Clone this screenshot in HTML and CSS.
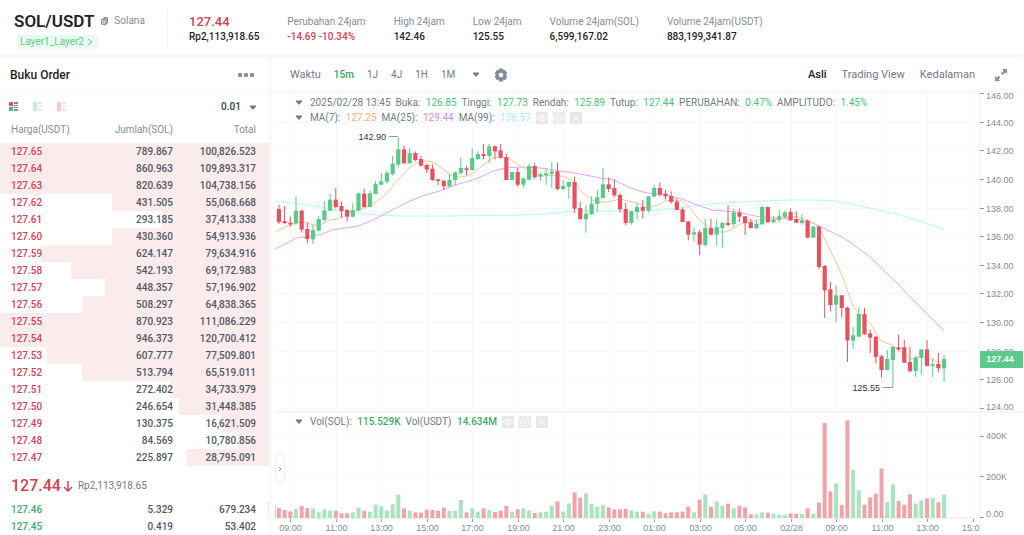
FILE: index.html
```
<!DOCTYPE html>
<html lang="id">
<head>
<meta charset="utf-8">
<title>SOL/USDT</title>
<link rel="stylesheet" href="styles.css">
</head>
<body>
<svg class="defs" aria-hidden="true">
  <symbol id="eye" viewBox="0 0 12 12"><path d="M1 6q5-6 10 0q-5 6-10 0z"/><circle cx="6" cy="6" r="1.7"/></symbol>
  <symbol id="cog" viewBox="0 0 12 12"><path d="M6 1l4.3 2.5v5L6 11 1.7 8.500v-5z"/><circle cx="6" cy="6" r="2"/></symbol>
  <symbol id="cross" viewBox="0 0 12 12"><path d="M2.500 2.500l7 7M9.500 2.500l-7 7"/></symbol>
  <symbol id="caret" viewBox="0 0 6 5"><path d="M0 .5h6v1L3.500 4.500h-1L0 1.500z"/></symbol>
</svg>
<header class="ticker">
  <div class="pair">
    <div class="pair-line">
      <h1>SOL/USDT</h1>
      <a class="project" href="#solana"><svg class="doc" viewBox="0 0 8 10"><path d="M2.500 1L5.500 0 8 1v6.500L6 8.500V10L3 9.500 0 9V3l2.500-.5z"/><path class="doc-lines" d="M1.500 4.500h2.500v3.500H1.500zM1.500 6h2.500M5.500 2.500v5"/></svg>Solana</a>
    </div>
    <a class="tag" href="#layer">Layer1_Layer2<svg viewBox="0 0 6 8"><path d="M1 1l4 3-4 3"/></svg></a>
  </div>
  <div class="stat stat-price"><strong class="down">127.44</strong><span>Rp2,113,918.65</span></div>
  <dl class="stats">
    <div class="stat"><dt>Perubahan 24jam</dt><dd class="down">-14.69 -10.34%</dd></div>
    <div class="stat"><dt>High 24jam</dt><dd>142.46</dd></div>
    <div class="stat"><dt>Low 24jam</dt><dd>125.55</dd></div>
    <div class="stat"><dt>Volume 24jam(SOL)</dt><dd>6,599,167.02</dd></div>
    <div class="stat"><dt>Volume 24jam(USDT)</dt><dd>883,199,341.87</dd></div>
  </dl>
</header>
<main class="workspace">
  <section class="panel book">
    <div class="book-head"><h2>Buku Order</h2><button class="more" aria-label="Menu"><i></i><i></i><i></i></button></div>
    <div class="book-tools">
      <button aria-label="Semua"><svg viewBox="0 0 10 10"><path fill="#e5535f" d="M0 0h4v4H0z"/><path fill="#4fba7b" d="M0 5h4v4H0z"/><path fill="#858b96" d="M5 0h4v2H5zM5 3h4v1H5zM5 5h4v1H5zM5 7h4v2H5z"/></svg></button>
      <button aria-label="Beli"><svg viewBox="0 0 10 10"><path fill="#c5ecd3" d="M0 0h4v9H0z"/><path fill="#e4e6e9" d="M5 0h4v2H5zM5 3h4v1H5zM5 5h4v1H5zM5 7h4v2H5z"/></svg></button>
      <button aria-label="Jual"><svg viewBox="0 0 10 10"><path fill="#f9c7cd" d="M0 0h4v9H0z"/><path fill="#e4e6e9" d="M5 0h4v2H5zM5 3h4v1H5zM5 5h4v1H5zM5 7h4v2H5z"/></svg></button>
      <label class="tick"><select aria-label="Presisi"><option>0.01</option></select><svg class="caret"><use href="#caret"/></svg></label>
    </div>
    <table class="asks">
      <thead><tr><th>Harga(USDT)</th><th>Jumlah(SOL)</th><th>Total</th></tr></thead>
      <tbody>
        <tr style="--depth:100%"><td>127.65</td><td>789.867</td><td>100,826.523</td></tr>
        <tr style="--depth:100%"><td>127.64</td><td>860.963</td><td>109,893.317</td></tr>
        <tr style="--depth:100%"><td>127.63</td><td>820.639</td><td>104,738.156</td></tr>
        <tr style="--depth:58.4%"><td>127.62</td><td>431.505</td><td>55,068.668</td></tr>
        <tr style="--depth:39.8%"><td>127.61</td><td>293.185</td><td>37,413.338</td></tr>
        <tr style="--depth:58.4%"><td>127.60</td><td>430.360</td><td>54,913.936</td></tr>
        <tr style="--depth:84.7%"><td>127.59</td><td>624.147</td><td>79,634.916</td></tr>
        <tr style="--depth:73.6%"><td>127.58</td><td>542.193</td><td>69,172.983</td></tr>
        <tr style="--depth:60.8%"><td>127.57</td><td>448.357</td><td>57,196.902</td></tr>
        <tr style="--depth:69.1%"><td>127.56</td><td>508.297</td><td>64,838.365</td></tr>
        <tr style="--depth:100%"><td>127.55</td><td>870.923</td><td>111,086.229</td></tr>
        <tr style="--depth:100%"><td>127.54</td><td>946.373</td><td>120,700.412</td></tr>
        <tr style="--depth:82.5%"><td>127.53</td><td>607.777</td><td>77,509.801</td></tr>
        <tr style="--depth:69.6%"><td>127.52</td><td>513.794</td><td>65,519.011</td></tr>
        <tr style="--depth:36.9%"><td>127.51</td><td>272.402</td><td>34,733.979</td></tr>
        <tr style="--depth:33.4%"><td>127.50</td><td>246.654</td><td>31,448.385</td></tr>
        <tr style="--depth:17.5%"><td>127.49</td><td>130.375</td><td>16,621.509</td></tr>
        <tr style="--depth:11.4%"><td>127.48</td><td>84.569</td><td>10,780.856</td></tr>
        <tr style="--depth:30.5%"><td>127.47</td><td>225.897</td><td>28,795.091</td></tr>
      </tbody>
    </table>
    <div class="last"><strong>127.44</strong><svg viewBox="0 0 10 12"><path d="M5 1v10M1 7l4 4 4-4"/></svg><span>Rp2,113,918.65</span></div>
    <table class="bids">
      <tbody>
        <tr style="--depth:.5%"><td>127.46</td><td>5.329</td><td>679.234</td></tr>
        <tr style="--depth:0%"><td>127.45</td><td>0.419</td><td>53.402</td></tr>
      </tbody>
    </table>
  </section>
  <section class="panel chart">
    <nav class="chart-bar">
      <span>Waktu</span><button class="on">15m</button><button>1J</button><button>4J</button><button>1H</button><button>1M</button>
      <button class="caret-button" aria-label="Interval lain"><svg class="caret"><use href="#caret"/></svg></button>
      <button aria-label="Pengaturan"><svg class="gear" viewBox="0 0 14 14"><path fill-rule="evenodd" d="M5 0.500h4l.5 1.800 1.800-.4 2 3.500L12 7l1.300 1.600-2 3.500-1.800-.4-.5 1.800H5l-.5-1.800-1.800.4-2-3.500L2 7 .7 5.400l2-3.500 1.800.4zM7 4.700a2.300 2.300 0 1 0 0 4.600 2.300 2.300 0 0 0 0-4.600z"/></svg></button>
      <div class="views"><button class="current">Asli</button><button>Trading View</button><button>Kedalaman</button>
      <button aria-label="Layar penuh"><svg class="expand" viewBox="0 0 14 14"><path d="M8 1h5v5l-1.700-1.700-2.800 2.800-1.600-1.600 2.800-2.800zM1 8l1.700 1.700 2-2 1.600 1.600-2 2L6 13H1z"/></svg></button></div>
    </nav>
    <div class="stage">
      <svg id="plot" class="plot" viewBox="272 92 752 443" role="img" aria-label="Grafik SOL/USDT"></svg>
      <div class="legend legend-price">
        <p><svg class="caret"><use href="#caret"/></svg><span>2025/02/28 13:45</span><span>Buka: <b>126.85</b></span><span>Tinggi: <b>127.73</b></span><span>Rendah: <b>125.89</b></span><span>Tutup: <b>127.44</b></span><span>PERUBAHAN: <b>0.47%</b></span><span>AMPLITUDO: <b>1.45%</b></span></p>
        <p><svg class="caret"><use href="#caret"/></svg><span>MA(7): <b class="ma7">127.25</b></span><span>MA(25): <b class="ma25">129.44</b></span><span>MA(99): <b class="ma99">136.57</b></span><span class="tools"><button aria-label="Sembunyikan MA"><svg><use href="#eye"/></svg></button><button aria-label="Atur MA"><svg><use href="#cog"/></svg></button><button aria-label="Hapus MA"><svg><use href="#cross"/></svg></button></span></p>
      </div>
      <div class="legend legend-volume">
        <p><svg class="caret"><use href="#caret"/></svg><span>Vol(SOL): <b class="vol">115.529K</b></span><span>Vol(USDT) <b class="vol">14.634M</b></span><span class="tools"><button aria-label="Sembunyikan volume"><svg><use href="#eye"/></svg></button><button aria-label="Atur volume"><svg><use href="#cog"/></svg></button><button aria-label="Hapus volume"><svg><use href="#cross"/></svg></button></span></p>
      </div>
      <button class="drawer" aria-label="Alat gambar"><svg viewBox="0 0 4 6"><path d="M1 1l2 2-2 2"/></svg></button>
    </div>
  </section>
</main>
<script src="chart.js"></script>
</body>
</html>
```
FILE: styles.css
```
* { box-sizing: border-box; }
body { margin: 0; background: #fff; color: #1e2329; font: 11px/16px Roboto, "Liberation Sans", sans-serif; }
body { height: 100vh; overflow: hidden; }
h1, h2, p, dl, dd { margin: 0; }
button { border: 0; padding: 0; background: none; color: inherit; font: inherit; display: flex; align-items: center; }
a { text-decoration: none; color: inherit; }
svg { display: block; }
.defs { position: absolute; width: 0; height: 0; }
.down { color: #cf4455; }
.caret { width: 6px; height: 5px; fill: #707a8a; }

.ticker { display: flex; align-items: center; height: 54px; padding-left: 14px; }
.pair { width: 154px; height: 40px; border-right: 1px solid #f3f4f5; }
.pair-line { display: flex; align-items: center; gap: 7px; height: 28px; }
h1 { font-size: 17px; line-height: 24px; font-weight: 600; }
.project { display: flex; align-items: center; gap: 6px; color: #858d9a; font-size: 10px; }
.doc { width: 7px; height: 10px; fill: #8b929d; }
.doc-lines { fill: none; stroke: #fff; stroke-width: .6; }
.tag { display: inline-flex; align-items: center; gap: 3px; height: 14px; margin-left: 3px; padding: 0 5px 0 3px; border-radius: 2px; background: #e9fbf0; color: #62ca8a; font-size: 10px; vertical-align: top; }
.tag svg { width: 6px; height: 8px; fill: none; stroke: #62ca8a; }
.stats { display: flex; gap: 28px; margin-left: 28px; }
.stat { display: flex; flex-direction: column; padding-top: 4px; white-space: nowrap; }
.stat dt { color: #858d9a; font-size: 10px; line-height: 15px; }
.stat dd { font-size: 10px; line-height: 15px; font-weight: 500; }
.stat-price { margin-left: 21px; font-size: 10px; line-height: 14px; font-weight: 500; }
.stat-price strong { font-size: 13px; line-height: 16px; font-weight: 500; }

.workspace { display: grid; grid-template-columns: 269px minmax(0, 1fr); gap: 3px; padding-top: 4px; background: #f9fafa; }
.panel { background: #fff; }
.book { border-radius: 0 4px 0 0; }
.chart { border-radius: 4px 4px 0 0; }
.book-head { display: flex; align-items: center; justify-content: space-between; height: 35px; padding: 0 15px 0 10px; border-bottom: 1px solid #f5f5f6; }
h2 { font-size: 12px; line-height: 16px; font-weight: 500; }
.more { gap: 2px; }
.more i { width: 4px; height: 4px; border-radius: 1px; background: #848e9c; }
.book-tools { display: flex; align-items: center; gap: 14px; height: 28px; padding: 0 13px 0 9px; }
.book-tools button svg { width: 10px; height: 10px; }
.tick { display: flex; align-items: center; gap: 9px; margin-left: auto; }
.tick select { appearance: none; border: 0; padding: 0; background: none; color: #33383f; font: 500 10px/14px Roboto, sans-serif; }
table { width: 100%; border-collapse: collapse; table-layout: fixed; font-size: 10px; font-weight: 500; color: #525862; }
th { height: 22px; padding: 0 0 5px; color: #858d9a; font-weight: 400; line-height: 17px; text-align: right; }
td { height: 17px; padding: 1px 0 0; line-height: 16px; text-align: right; }
th:nth-child(1), td:nth-child(1) { width: 81px; padding-left: 11px; text-align: left; }
th:nth-child(2), td:nth-child(2) { width: 92px; }
th:nth-child(3), td:nth-child(3) { padding-right: 13px; }
.asks td:first-child { color: #cf4455; }
.bids td:first-child { color: #43a86d; }
.asks tbody tr { background: linear-gradient(to left, #faebed var(--depth), transparent 0); }
.bids tr { background: linear-gradient(to left, #d6f3e0 var(--depth), transparent 0); }
.last { display: flex; align-items: center; height: 35px; padding: 4px 0 0 11px; font-size: 10px; color: #707a8a; }
.last strong { color: #cf4455; font-size: 16px; font-weight: 500; }
.last svg { width: 10px; height: 12px; margin: 0 5px 0 2px; fill: none; stroke: #cf4455; stroke-width: 1.500; }

.chart-bar { display: flex; align-items: center; gap: 13px; height: 34px; padding: 0 16px 0 18px; border-bottom: 1px solid #f5f5f6; color: #707a8a; }
.chart-bar > button { font-size: 10px; }
.chart-bar .on { color: #2fa35e; font-weight: 500; }
.caret-button { margin: 0 2px 0 5px; }
.gear { width: 14px; height: 14px; fill: #848e9c; }
.views { display: flex; align-items: center; gap: 15px; margin-left: auto; color: #707a8a; }
.views .current { color: #1e2329; font-weight: 500; }
.expand { width: 14px; height: 14px; margin-left: 4px; fill: #848e9c; }
.stage { position: relative; }
.plot { width: 100%; height: auto; font-family: "Liberation Sans", Arial, sans-serif; font-size: 9px; }
.legend { position: absolute; left: 24px; color: #707a8a; font-size: 10px; }
.legend p { display: flex; align-items: center; gap: 5px; height: 15px; white-space: nowrap; }
.legend .caret { margin-right: 3px; }
.legend b { margin-left: 3px; font-weight: 400; color: #48c278; }
.legend-price { top: 3px; }
.legend-volume { top: 322px; }
.legend .ma7 { color: #f0b27a; }
.legend .ma25 { color: #dc85ee; }
.legend .ma99 { color: #9feff6; }
.legend .vol { color: #43a86d; font-weight: 500; }
.tools { display: flex; gap: 5px; }
.tools svg { width: 12px; height: 12px; background: #e8e8e8; fill: none; stroke: #fff; stroke-width: .8; }
.drawer { position: absolute; top: 363px; left: 3px; width: 10px; height: 28px; justify-content: center; border: 1px solid #eeeff0; border-radius: 3px; background: #fff; }
.drawer svg { width: 4px; height: 6px; fill: none; stroke: #707a8a; stroke-width: .8; }

.grid { stroke: #f7f8f8; }
.divider { stroke: #f5f5f6; stroke-width: 2; }
.axis { stroke: #eff0f1; }
.mark { stroke: #9298a1; }
.label { fill: #858b95; }
.note { fill: #333942; font-size: 9px; }
.up-fill { fill: #5ac98a; }
.down-fill { fill: #e4535f; }
.up-volume { fill: #a9e3c0; }
.down-volume { fill: #f0a3aa; }
.average { fill: none; }
.average-7 { stroke: #f3c59b; }
.average-25 { stroke: #e6a4f4; }
.average-99 { stroke: #b8f6fa; }
.price-tag { fill: #5ac98a; }
.price-text { fill: #fff; font-weight: bold; }
```
FILE: chart.js
```
const NS = "http://www.w3.org/2000/svg";
const plot = document.getElementById("plot");
const STEP = 5.685;
const x = k => 290.3 + k * STEP;
const y = u => 130 + u / 3;
const price = p => 208 + (138 - p) * 14.33;

function draw(tag, attrs, text) {
  const node = document.createElementNS(NS, tag);
  for (const key in attrs) node.setAttribute(key, attrs[key]);
  if (text) node.textContent = text;
  plot.append(node);
}
const line = (cls, x1, y1, x2, y2) => draw("line", { class: cls, x1, y1, x2, y2 });

// Direction, then high, body top, body bottom and low in thirds of a unit.
const candles = `R 224 237 276 282,R 228 273 279 283,R 260 278 283 290,G 200 242 280 284,R 240 242 299 308,R 278 297 327 340,G 284 300 328 343,G 258 267 302 304,G 213 241 270 275,G 190 209 242 243,R 174 209 231 235,R 214 228 244 262,R 237 240 260 275,G 220 240 260 263,G 187 190 242 245,R 176 191 231 233,G 182 190 231 232,G 153 162 192 193,G 129 154 164 166,G 122 129 155 161,G 78 101 132 137,G 22 58 104 113,R 47 58 100 101,G 54 69 100 101,R 64 69 90 94,R 78 87 107 110,R 101 105 119 129,R 103 116 150 153,R 146 148 153 165,R 150 152 169 180,G 132 150 169 171,G 124 127 150 165,G 82 114 129 134,R 108 115 120 136,G 55 84 120 123,G 64 72 87 90,R 42 72 78 88,G 42 49 78 98,R 46 49 64 88,R 42 61 83 86,R 71 81 150 150,G 126 126 150 152,R 114 126 164 170,G 142 145 164 172,G 102 108 149 152,R 99 108 141 147,G 128 133 140 152,G 114 130 136 164,G 95 124 131 174,R 98 124 177 181,G 150 168 177 181,G 155 156 170 207,R 140 156 236 248,R 215 234 267 270,G 226 251 268 308,G 198 221 253 255,G 180 202 222 245,G 114 163 204 205,R 142 163 177 186,R 149 174 196 202,R 190 195 238 248,R 218 237 279 285,G 242 244 279 284,G 219 231 246 268,R 210 231 242 265,G 198 199 242 248,G 164 174 200 201,R 157 174 194 199,R 180 191 199 208,R 184 198 216 221,R 206 215 240 241,R 232 238 276 277,R 273 274 314 331,G 292 307 314 335,R 300 307 344 376,G 267 294 345 350,R 267 294 314 316,G 268 291 314 348,G 277 279 294 352,R 225 279 285 288,G 236 247 282 290,R 236 248 260 276,R 258 259 279 315,R 267 277 294 296,G 270 281 294 298,G 227 231 283 284,R 230 231 277 278,G 257 269 277 280,G 240 259 269 278,G 241 247 261 266,R 235 246 271 273,R 244 267 278 279,G 253 272 279 284,R 268 272 323 324,G 287 290 323 323,R 287 290 411 418,R 405 408 481 564,R 456 478 525 545,G 466 496 524 578,R 495 496 534 562,R 530 533 631 696,G 591 616 632 657,G 532 552 620 621,R 533 552 613 614,R 600 610 623 669,R 618 620 681 700,R 674 679 720 743,G 660 687 720 721,G 648 651 690 772,R 614 652 658 664,R 630 652 698 699,R 650 696 723 728,G 678 683 723 741,G 657 658 683 735,R 630 658 708 709,G 686 703 708 741,R 669 702 715 727,G 675 687 715 755`
  .split(",").map(row => row.split(" "));

const volumes = [30,24,20,27,36,30,28,17,26,22,22,14,14,17,31,22,19,40,35,23,41,70,29,22,17,16,25,24,22,31,21,22,54,17,29,19,29,24,18,22,36,19,26,29,22,15,17,19,37,50,19,44,77,61,74,43,34,39,32,26,26,28,23,19,19,13,20,19,14,17,17,19,34,17,55,70,34,50,37,43,29,37,32,11,11,17,16,13,10,9,14,13,12,29,13,46,285,80,103,39,293,144,83,40,62,73,149,48,101,51,40,71,44,53,59,60,47,70];

const averages = {
  99: "275,201 300,204 320,207 345,211 358,213 375,215 400,216 450,216 520,215 545,214 565,212 590,211 640,211 660,210 680,208 700,205 725,203 760,201 790,200 815,200 835,201 870,208 900,215 944,229",
  25: "275,249 287,243 296,238 305,237 313,236 322,234 332,230 345,228 358,226 373,220 398,207 410,201 425,195 440,191 455,185 470,181 483,176 493,171 505,168 520,167 540,168 560,171 575,173 585,175 600,178 615,180 620,183 633,189 643,192 655,194 665,195 682,199 700,206 712,210 725,211 738,212 755,216 775,218 790,219 800,220 813,223 827,230 842,237 850,242 870,257 885,272 898,284 912,299 925,312 944,331",
  7: "275,232 287,226 296,223 305,222 313,225 320,225 330,220 338,219 350,213 358,210 370,206 380,199 387,193 398,180 408,169 417,163 425,161 433,162 443,169 452,176 460,177 467,176 473,173 483,165 493,158 502,157 510,159 518,165 527,169 535,174 543,176 557,175 568,178 575,183 582,192 592,200 602,202 608,202 620,199 628,201 637,203 643,206 648,208 658,205 665,201 673,200 682,201 690,208 700,221 710,228 718,232 725,232 732,229 740,224 750,222 762,219 775,220 790,217 798,217 813,223 819,227 830,250 837,264 843,278 853,306 860,315 870,323 881,341 892,345 900,351 910,359 920,357 930,358 938,362 944,362"
};

const times = ["09:00","11:00","13:00","15:00","17:00","19:00","21:00","23:00","01:00","03:00","05:00","02/28","09:00","11:00","13:00","15:0"];
times.forEach((time, i) => {
  const at = Math.round(x(i * 8)) + .5;
  line("grid", at, 92, at, 518);
  line("mark", at, 518, at, 522);
  draw("text", { class: "label", x: i === 15 ? 962 : at, y: 531, "text-anchor": i === 15 ? "start" : "middle" }, time);
});
for (let p = 146; p >= 124; p -= 2) {
  const at = Math.floor(price(p)) + .5;
  line("grid", 275, at, 980, at);
  line("mark", 980, at, 984, at);
  draw("text", { class: "label", x: 986, y: p === 146 ? 99 : p === 124 ? 410 : at + 3 }, p.toFixed(2));
}
[["400K", 436, 439], ["200K", 476, 480], ["0.00", 517, 517]].forEach(([name, at, base]) => {
  line("grid", 275, at + .5, 980, at + .5);
  line("mark", 980, at + .5, 984, at + .5);
  draw("text", { class: "label", x: 986, y: base }, name);
});
line("divider", 275, 412, 1024, 412);
line("axis", 979.5, 92, 979.5, 518);
line("axis", 275, 518.5, 980, 518.5);

draw("rect", { class: "up-volume", x: 275, y: 505, width: 1, height: 13 });
for (const span of [99, 25, 7]) draw("polyline", { class: "average average-" + span, points: averages[span] });
candles.forEach(([side, high, top, bottom, low], i) => {
  const cx = x(i - 2);
  const kind = side === "G" ? "up" : "down";
  draw("rect", { class: kind + "-volume", x: cx - 2, y: 518 - volumes[i] / 3, width: 4, height: volumes[i] / 3 });
  draw("rect", { class: kind + "-fill", x: cx - .5, y: y(high), width: 1, height: (low - high) / 3 });
  draw("rect", { class: kind + "-fill", x: cx - 2.1, y: y(top), width: 4.2, height: Math.max(1, (bottom - top) / 3) });
});

line("mark", 389, 136.5, 398, 136.5);
draw("text", { class: "note", x: 386, y: 140, "text-anchor": "end" }, "142.90");
line("mark", 883, 387.5, 893, 387.5);
draw("text", { class: "note", x: 880, y: 391, "text-anchor": "end" }, "125.55");
draw("rect", { class: "price-tag", x: 980, y: 351, width: 43, height: 17 });
draw("text", { class: "price-text", x: 1000, y: 362, "text-anchor": "middle" }, "127.44");
```
